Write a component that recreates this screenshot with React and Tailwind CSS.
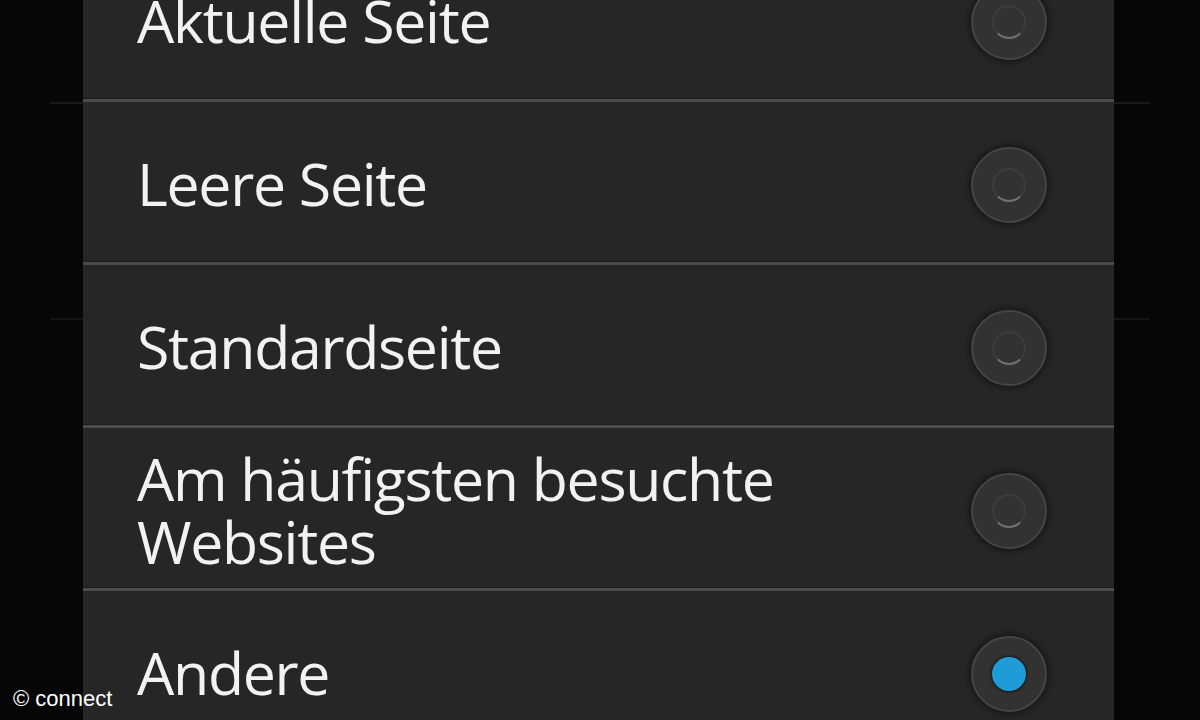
import React from "react";

const rows = [
  { label: ["Aktuelle Seite"], selected: false },
  { label: ["Leere Seite"], selected: false },
  { label: ["Standardseite"], selected: false },
  { label: ["Am häufigsten besuchte", "Websites"], selected: false },
  { label: ["Andere"], selected: true },
];

function Radio({ selected }) {
  return (
    <div className="mt-[6px] w-[76px] h-[76px] shrink-0 rounded-full bg-[#323232] border-2 border-[#454545] shadow-[0_0_6px_2px_rgba(0,0,0,0.45)] flex items-center justify-center">
      {selected ? (
        <div className="w-[34px] h-[34px] rounded-full bg-[#1f9bd8] shadow-[0_0_3px_1px_rgba(0,0,0,0.6)]" />
      ) : (
        <div className="w-[34px] h-[34px] rounded-full border-2 border-[#3c3c3c] border-b-[#707070]" />
      )}
    </div>
  );
}

export default function App() {
  return (
    <div className="relative w-[1200px] h-[720px] overflow-hidden bg-[#060606] flex justify-center" style={{ fontFamily: '"Open Sans", "Noto Sans", sans-serif' }}>
      <div className="w-[83px] shrink-0 flex flex-col">
        <div className="h-[102px] shrink-0" />
        <div className="h-[2px] shrink-0 ml-[50px] bg-[#1a1a1a]" />
        <div className="h-[214px] shrink-0" />
        <div className="h-[2px] shrink-0 ml-[50px] bg-[#161616]" />
      </div>
      <div className="w-[1031px] shrink-0 bg-[#262626] flex flex-col mt-[-61px]">
        {rows.map((r, i) => (
          <React.Fragment key={i}>
            {i > 0 && (
              <div className="flex flex-col shrink-0">
                <div className="h-[1px] bg-[#1b1b1b]" />
                <div className="h-[3px] bg-[#4b4b4b]" />
              </div>
            )}
            <div className="h-[159px] shrink-0 flex items-center justify-between pl-[54px] pr-[67px]">
              <div className="text-[59px] leading-[63px] text-[#f2f2f2] tracking-[-1.3px] pt-[4px]">
                {r.label.map((l, j) => (
                  <div key={j}>{l}</div>
                ))}
              </div>
              <Radio selected={r.selected} />
            </div>
          </React.Fragment>
        ))}
      </div>
      <div className="w-[86px] shrink-0 flex flex-col">
        <div className="h-[102px] shrink-0" />
        <div className="h-[2px] shrink-0 mr-[50px] bg-[#1a1a1a]" />
        <div className="h-[214px] shrink-0" />
        <div className="h-[2px] shrink-0 mr-[50px] bg-[#161616]" />
      </div>
      <div className="absolute left-[13px] bottom-[10px] text-[22px] leading-none text-white" style={{ fontFamily: '"Liberation Sans", Arial, sans-serif' }}>
        © connect
      </div>
    </div>
  );
}
